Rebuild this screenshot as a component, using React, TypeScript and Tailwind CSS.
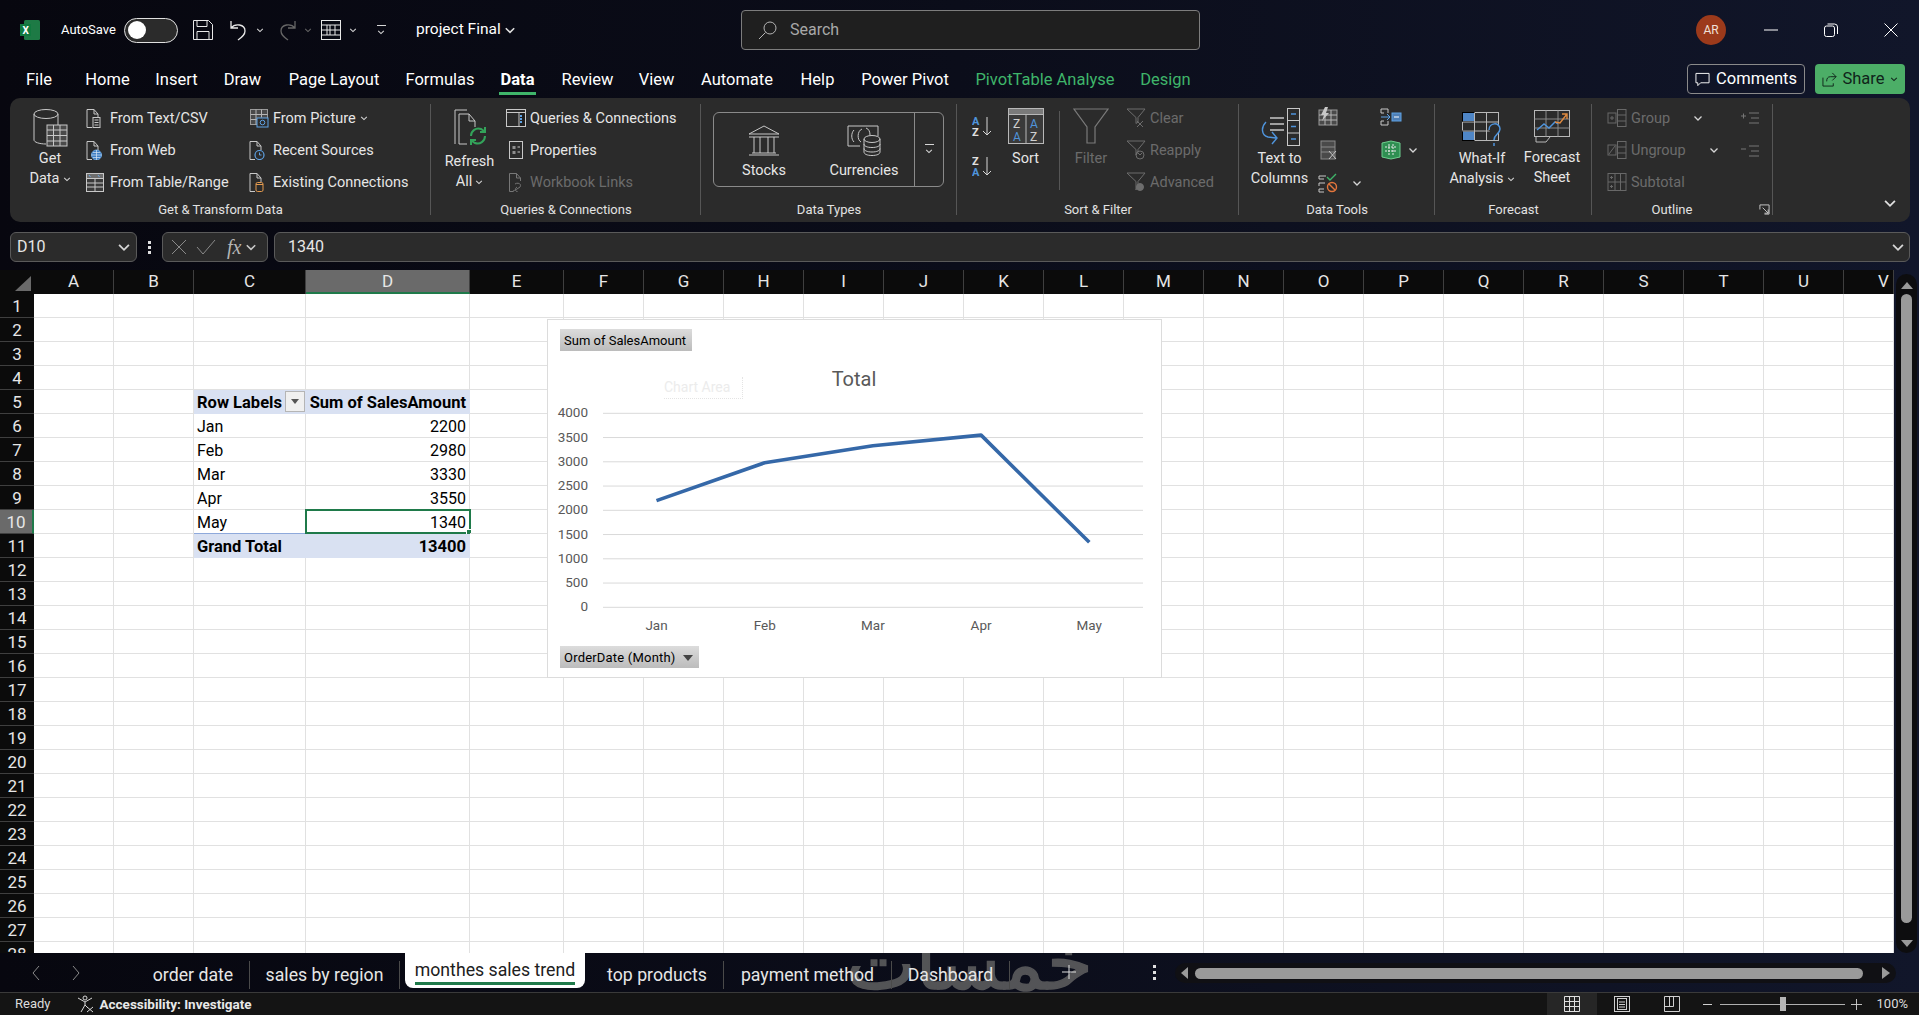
import React from "react";

const font = "font-['Roboto',sans-serif]";

type IconProps = { className?: string; children: React.ReactNode; box?: string };

const Ic = ({ className = "w-5 h-5", children, box = "0 0 20 20" }: IconProps) => (
  <svg viewBox={box} fill="none" stroke="currentColor" strokeWidth={1} className={`shrink-0 ${className}`}>
    {children}
  </svg>
);

const Chevron = ({ className = "w-2.5 h-2.5 text-[#d6d6d6]" }: { className?: string }) => (
  <Ic box="0 0 10 10" className={className}>
    <path d="M1.5 3.5 5 7l3.5-3.5" strokeWidth={1.3} />
  </Ic>
);

const DocBase = ({ children }: { children?: React.ReactNode }) => (
  <g transform="translate(-2.5 0)">
    <path d="M3.5 19.5v-18h7l4 4.5v4" stroke="#c8c8c8" />
    <path d="M10.5 1.5V6h4" stroke="#c8c8c8" />
    <path d="M3.5 19.5h5" stroke="#c8c8c8" />
    {children}
  </g>
);

const icons: Record<string, React.ReactNode> = {
  text: (
    <DocBase>
      <rect x="9.5" y="9.5" width="7" height="10" stroke="#c8c8c8" />
      <path d="M11 12h4M11 14.5h4M11 17h4" stroke="#c8c8c8" />
    </DocBase>
  ),
  web: (
    <DocBase>
      <circle cx="13" cy="15" r="5" fill="#3f7fc4" stroke="#6fa8e0" />
      <path d="M8 15h10M13 10v10M9.5 12.5h7M9.5 17.5h7" stroke="#d8e6f5" strokeWidth={0.7} />
    </DocBase>
  ),
  table: (
    <>
      <rect x="0.5" y="1.5" width="17" height="18" fill="#3a3a3a" stroke="#c8c8c8" />
      <rect x="0.5" y="1.5" width="17" height="5" fill="#6e6e6e" stroke="#c8c8c8" />
      <path d="M.5 11h17M.5 15h17M9 6.5v13" stroke="#c8c8c8" />
      <path d="M3 3l1.5 2M12 3l1.5 2" stroke="#6fa8e0" />
    </>
  ),
  picture: (
    <>
      <rect x="1.5" y="1.5" width="17" height="15" stroke="#9a9a9a" fill="#4a4a4a" />
      <path d="M1.5 6.5h17M1.5 11.5h9M7 1.5v15M12.5 1.5v8" stroke="#b5b5b5" />
      <rect x="8" y="10" width="11" height="9" fill="#2b2b2b" stroke="#5fa3e6" />
      <circle cx="13.5" cy="14.5" r="2.3" stroke="#5fa3e6" />
    </>
  ),
  recent: (
    <DocBase>
      <circle cx="13" cy="15" r="4.5" fill="#2b2b2b" stroke="#5fa3e6" strokeWidth={1.2} />
      <path d="M13 12.5V15h2" stroke="#5fa3e6" />
    </DocBase>
  ),
  existing: (
    <DocBase>
      <rect x="9.5" y="10.5" width="7" height="9" rx="1.5" fill="#2b2b2b" stroke="#e39a4f" />
      <path d="M9.5 12.5h7" stroke="#e39a4f" />
    </DocBase>
  ),
  queries: (
    <>
      <rect x="0.5" y="1.5" width="19" height="17" stroke="#c8c8c8" />
      <path d="M0.5 4.5h19" stroke="#c8c8c8" />
      <rect x="13" y="4.5" width="6.5" height="14" fill="#1f1f1f" stroke="#c8c8c8" />
      <path d="M15 7v9" stroke="#5fa3e6" strokeWidth={2} strokeDasharray="2 1" />
    </>
  ),
  props: (
    <>
      <rect x="3.5" y="1.5" width="13" height="17" stroke="#c8c8c8" />
      <path d="M6.5 6h3v3h-3zM6.5 11h3v3h-3z" fill="#8f8f8f" stroke="none" />
      <path d="M11.5 7h2.5M11.5 12h2.5" stroke="#c8c8c8" />
    </>
  ),
  links: (
    <>
      <path d="M3.5 19.5v-18h7l4 4.5v3M3.5 19.5h4M10.5 1.5V6h4" stroke="#777" />
      <path d="M9 12c3-2 7 0 5 3l-3 2c-2 2-5 1-4 3M12 20c-2 0-4-3-1-5" stroke="#777" />
    </>
  ),
  clear: (
    <>
      <path d="M1 1h18l-7 8.5V14l-2 1.5V9.5z" stroke="#6d6d6d" />
      <path d="m11 13 6 6m0-6-6 6" stroke="#6d6d6d" />
    </>
  ),
  reapply: (
    <>
      <path d="M1 1h18l-7 8.5V12l-2 3V9.5z" stroke="#6d6d6d" />
      <circle cx="14" cy="15" r="4" stroke="#6d6d6d" />
      <path d="M12 13l2 2 2-2" stroke="#6d6d6d" />
    </>
  ),
  advanced: (
    <>
      <path d="M1 1h18l-7 8.5V12l-2 6V9.5z" stroke="#6d6d6d" />
      <circle cx="14" cy="15" r="3.5" fill="#6d6d6d" stroke="#6d6d6d" />
    </>
  ),
  group: (
    <>
      <rect x="1" y="5" width="8" height="10" stroke="#686868" />
      <path d="M3 10h4M5 8v4" stroke="#686868" />
      <rect x="10.5" y="1.5" width="8.5" height="17" stroke="#686868" />
      <path d="M10.5 7h8.5M10.5 13h8.5" stroke="#686868" />
    </>
  ),
  ungroup: (
    <>
      <rect x="1" y="5" width="8" height="10" stroke="#686868" />
      <path d="m2 14 6-8" stroke="#686868" />
      <rect x="10.5" y="1.5" width="8.5" height="17" stroke="#686868" />
      <path d="M10.5 7h8.5M10.5 13h8.5" stroke="#686868" />
    </>
  ),
  subtotal: (
    <>
      <rect x="1" y="1.5" width="18" height="17" stroke="#686868" />
      <path d="M1 10h18M8 1.5v17M13.5 1.5v17" stroke="#686868" />
      <path d="M3 5.5h3M4.5 4v3M3 14.5h3M4.5 13v3" stroke="#686868" />
    </>
  ),
};

const SmallItem = ({ icon, label, muted, tail }: { icon: string; label: string; muted?: boolean; tail?: React.ReactNode }) => (
  <div className={`flex items-center h-8 whitespace-nowrap ${muted ? "text-[#6b6b6b]" : "text-[#e6e6e6]"}`}>
    <Ic className="w-5 h-5 mr-1">{icons[icon]}</Ic>
    <span className="mt-[2px]">{label}</span>
    {tail}
  </div>
);

const GroupBox = ({
  width,
  label,
  children,
  extra,
  labelClass = "",
}: {
  width: string;
  label: string;
  children: React.ReactNode;
  extra?: React.ReactNode;
  labelClass?: string;
}) => (
  <div className={`relative flex flex-col shrink-0 ${width}`}>
    <div className="flex-1 min-h-0 relative">{children}</div>
    <div className={`h-[24px] text-center text-[13px] leading-[24px] text-[#e2e2e2] whitespace-nowrap ${labelClass}`}>{label}</div>
    {extra}
    <div className="absolute right-0 top-[6px] bottom-[7px] w-px bg-[#565656]" />
  </div>
);

const BigLabel = ({ lines, chevron, muted }: { lines: string[]; chevron?: boolean; muted?: boolean }) => (
  <div className={`text-center leading-[20px] whitespace-nowrap ${muted ? "text-[#6b6b6b]" : "text-[#e6e6e6]"}`}>
    {lines.map((l, i) => (
      <div key={l} className="flex items-center justify-center gap-[3px]">
        {l}
        {chevron && i === lines.length - 1 && <Chevron className="w-2 h-2 text-[#d6d6d6]" />}
      </div>
    ))}
  </div>
);

const GetAndTransform = () => (
  <GroupBox width="w-[421px]" label="Get & Transform Data">
    <div className="flex pt-[4px] h-full">
      <div className="w-[76px] flex flex-col items-center pl-[4px] pt-[6px]">
        <Ic box="0 0 36 40" className="w-9 h-10">
          <path d="M2 6v26c0 2 5 4 12 4" stroke="#c8c8c8" />
          <ellipse cx="14" cy="6" rx="12" ry="4.5" stroke="#c8c8c8" />
          <path d="M26 6v11" stroke="#c8c8c8" />
          <rect x="15" y="17" width="20" height="21" fill="#4a4a4a" stroke="#c8c8c8" />
          <path d="M15 22h20M15 27.5h20M15 33h20M21.5 17v21M28 17v21" stroke="#c8c8c8" />
        </Ic>
        <div className="mt-[1px]"><BigLabel lines={["Get", "Data"]} chevron /></div>
      </div>
      <div className="w-[163px]">
        <SmallItem icon="text" label="From Text/CSV" />
        <SmallItem icon="web" label="From Web" />
        <SmallItem icon="table" label="From Table/Range" />
      </div>
      <div>
        <SmallItem icon="picture" label="From Picture" tail={<Chevron className="w-2 h-2 ml-1 text-[#d6d6d6]" />} />
        <SmallItem icon="recent" label="Recent Sources" />
        <SmallItem icon="existing" label="Existing Connections" />
      </div>
    </div>
  </GroupBox>
);

const QueriesGroup = () => (
  <GroupBox width="w-[270px]" label="Queries & Connections">
    <div className="flex pt-[4px] h-full">
      <div className="w-[75px] flex flex-col items-center pl-[2px] pt-[6px]">
        <Ic box="0 0 36 40" className="w-9 h-10 mb-[4px]">
          <path d="M3 36V2h12M7 36V6h10l6 7v6M7 36h8M17 6v7h6" stroke="#c8c8c8" />
          <path d="M19 28c0-5 5-9 10-7l3 2M33 28c0 5-5 9-10 7l-3-2" stroke="#33a35a" strokeWidth={2} />
          <path d="M33 19v5h-5M19 37v-5h5" stroke="#33a35a" strokeWidth={2} />
        </Ic>
        <BigLabel lines={["Refresh", "All"]} chevron />
      </div>
      <div>
        <SmallItem icon="queries" label="Queries & Connections" />
        <SmallItem icon="props" label="Properties" />
        <SmallItem icon="links" label="Workbook Links" muted />
      </div>
    </div>
  </GroupBox>
);

const DataTypes = () => (
  <GroupBox width="w-[256px]" label="Data Types">
    <div className="pl-[12px] pt-[14px]">
      <div className="flex w-[231px] h-[75px] rounded-md border border-[#8a8a8a]">
        <div className="flex-1 flex pt-[11px]">
          <div className="w-[100px] flex flex-col items-center text-[#e6e6e6]">
            <Ic box="0 0 36 32" className="w-9 h-8 text-[#c8c8c8] mb-[4px]">
              <path d="M18 2 3 10h30zM3 13h30M6 29h24M3 31h30M8 13v16M14 13v16M22 13v16M28 13v16" />
            </Ic>
            Stocks
          </div>
          <div className="flex-1 flex flex-col items-center text-[#e6e6e6]">
            <Ic box="0 0 36 32" className="w-9 h-8 text-[#c8c8c8] mb-[4px]">
              <path d="M2 22V2h30v10M2 22h12" />
              <path d="M8 6c-3 3-3 9 0 12M16 5c-5 2-5 11-1 13M20 4c3 1 4 4 4 7" />
              <ellipse cx="26" cy="15" rx="8" ry="3.5" fill="#2b2b2b" />
              <path d="M18 15v13c0 2 3 3.5 8 3.5s8-1.5 8-3.5V15M18 20c0 2 3 3.5 8 3.5s8-1.5 8-3.5M18 24.5c0 2 3 3.5 8 3.5s8-1.5 8-3.5" />
            </Ic>
            Currencies
          </div>
        </div>
        <div className="w-[29px] border-l border-[#8a8a8a] flex flex-col items-center justify-center text-[#d6d6d6]">
          <div className="w-[9px] h-px bg-[#d6d6d6] mb-[2px]" />
          <Chevron className="w-2.5 h-2 text-[#d6d6d6]" />
        </div>
      </div>
    </div>
  </GroupBox>
);

const SortFilter = () => (
  <GroupBox width="w-[282px]" label="Sort & Filter">
    <div className="flex pt-[4px] h-full">
      <div className="w-[43px] pl-[15px] pt-[14px] flex flex-col gap-[19px]">
        <Ic box="0 0 22 21" className="w-[22px] h-[21px]">
          <text x="0" y="9" fontSize="11" fill="#4f94dc" stroke="none" fontWeight="700">A</text>
          <text x="0" y="19.5" fontSize="11" fill="#e0e0e0" stroke="none" fontWeight="700">Z</text>
          <path d="M15 1v18M11 15l4 4 4-4" stroke="#d8d8d8" />
        </Ic>
        <Ic box="0 0 22 21" className="w-[22px] h-[21px]">
          <text x="0" y="9" fontSize="11" fill="#e0e0e0" stroke="none" fontWeight="700">Z</text>
          <text x="0" y="19.5" fontSize="11" fill="#4f94dc" stroke="none" fontWeight="700">A</text>
          <path d="M15 1v18M11 15l4 4 4-4" stroke="#d8d8d8" />
        </Ic>
      </div>
      <div className="w-[51px] mr-[8px] flex flex-col items-center pt-[6px]">
        <Ic box="0 0 36 36" className="w-9 h-9">
          <rect x="0.5" y="0.5" width="35" height="35" fill="#3a3a3a" stroke="#b8b8b8" />
          <rect x="0.5" y="0.5" width="35" height="6" fill="#7a7a7a" stroke="#b8b8b8" />
          <path d="M18 6.5v29" stroke="#b8b8b8" />
          <text x="5" y="20" fontSize="12" fill="#d0d0d0" stroke="none">Z</text>
          <text x="5" y="33" fontSize="12" fill="#4f94dc" stroke="none">A</text>
          <text x="22" y="20" fontSize="12" fill="#4f94dc" stroke="none">A</text>
          <text x="22" y="33" fontSize="12" fill="#d0d0d0" stroke="none">Z</text>
        </Ic>
        <div className="mt-[5px]"><BigLabel lines={["Sort"]} /></div>
      </div>
      <div className="w-px h-[79px] mt-[9px] bg-[#565656]" />
      <div className="w-[62px] flex flex-col items-center pt-[6px]">
        <Ic box="0 0 36 36" className="w-9 h-9 text-[#7a7a7a]">
          <path d="M1 1h34L22 19v16h-8V19z" strokeWidth={1.2} />
        </Ic>
        <div className="mt-[5px]"><BigLabel lines={["Filter"]} muted /></div>
      </div>
      <div className="pl-[4px]">
        <SmallItem icon="clear" label="Clear" muted />
        <SmallItem icon="reapply" label="Reapply" muted />
        <SmallItem icon="advanced" label="Advanced" muted />
      </div>
    </div>
  </GroupBox>
);

const DataTools = () => (
  <GroupBox width="w-[196px]" label="Data Tools">
    <div className="flex pt-[4px] h-full">
      <div className="w-[79px] flex flex-col items-center pl-[2px] pt-[6px]">
        <Ic box="0 0 40 38" className="w-10 h-[38px]">
          <path d="M10 10h14M10 16h14M10 22h14" stroke="#c8c8c8" strokeWidth={1.4} />
          <rect x="27.5" y="0.5" width="12" height="37" stroke="#c8c8c8" />
          <path d="M27.5 12.5h12M27.5 25h12" stroke="#c8c8c8" />
          <path d="M31 6h5M31 18.5h5M31 31h5" stroke="#4f94dc" strokeWidth={1.6} />
          <path d="M6 14c-5 5-5 13 2 15l8 1M12 24l5 6-5 6" stroke="#4f94dc" strokeWidth={1.4} />
        </Ic>
        <div className="mt-[3px]"><BigLabel lines={["Text to", "Columns"]} /></div>
      </div>
      <div className="w-[62px] flex flex-col">
        <Ic className="w-5 h-5 mt-[5px] ml-[0px]">
          <rect x="1" y="3" width="18" height="15" fill="#4a4a4a" stroke="#9a9a9a" />
          <path d="M1 8h18M1 13h18M7 3v15M13 3v15" stroke="#b5b5b5" />
          <path d="M7 0 3 8h3l-2 6 7-8H8l2-6z" fill="#c8c8c8" stroke="none" />
        </Ic>
        <Ic className="w-5 h-5 mt-[13px]">
          <rect x="3" y="1" width="14" height="18" fill="#4a4a4a" stroke="#8a8a8a" />
          <path d="M3 7h14M3 12h14" stroke="#8a8a8a" />
          <path d="m11 11 7 8m0-8-7 8" stroke="#c8c8c8" />
        </Ic>
        <div className="flex items-center mt-[13px]">
          <Ic className="w-5 h-5">
            <path d="M1 3h7M1 3v3h5M1 10h6M1 10v3M1 16h5M1 16v3h5" stroke="#c8c8c8" />
            <path d="m9 4 3 3 6-6" stroke="#3fb56a" strokeWidth={1.4} />
            <circle cx="14" cy="14" r="4.5" stroke="#e3763c" strokeWidth={1.4} />
            <path d="m11 11 6 6" stroke="#e3763c" strokeWidth={1.4} />
          </Ic>
          <Chevron className="w-2.5 h-2.5 ml-[14px] text-[#d6d6d6]" />
        </div>
      </div>
      <div className="flex flex-col">
        <Ic box="0 0 22 20" className="w-[22px] h-5 mt-[5px]">
          <path d="M1 2h7v4M1 2v4h3M1 14v4h7v-4M1 14h3" stroke="#c8c8c8" />
          <path d="M1 10h9M7 7l3 3-3 3" stroke="#5fa3e6" />
          <rect x="12" y="6" width="9" height="8" fill="#4f7fb5" stroke="#5fa3e6" />
          <path d="M14 10h5" stroke="#fff" />
        </Ic>
        <div className="flex items-center mt-[13px]">
          <Ic box="0 0 22 20" className="w-[22px] h-5">
            <path d="M2 3 11 1l9 2v14l-9 2-9-2z" fill="#2f8f52" stroke="#6fcf8f" />
            <path d="M5 7h12M5 11h12M9 4v12M13 4v12" stroke="#e8e8e8" strokeDasharray="2 1" />
          </Ic>
          <Chevron className="w-2.5 h-2.5 ml-[6px] text-[#d6d6d6]" />
        </div>
      </div>
    </div>
  </GroupBox>
);

const ForecastGroup = () => (
  <GroupBox width="w-[157px]" label="Forecast">
    <div className="flex pt-[4px] h-full">
      <div className="w-[94px] flex flex-col items-center pt-[10px]">
        <Ic box="0 0 40 36" className="w-10 h-9 mb-[1px]">
          <rect x="0.5" y="0.5" width="36" height="28" stroke="#b8b8b8" />
          <rect x="0.5" y="0.5" width="12" height="9" fill="#4f86c6" />
          <rect x="0.5" y="19" width="12" height="9.5" fill="#4f86c6" />
          <path d="M0.5 10h36M0.5 19h36M12.5 0.5v28M24.5 0.5v28" stroke="#b8b8b8" />
          <path d="M27 18c0-8 11-8 11-1 0 5-6 5-6 11M32 31v3" stroke="#4f94dc" strokeWidth={1.5} fill="#2b2b2b" />
        </Ic>
        <BigLabel lines={["What-If", "Analysis"]} chevron />
      </div>
      <div className="w-[46px] flex flex-col items-center pt-[8px]">
        <Ic box="0 0 36 34" className="w-9 h-[34px] mb-[4px]">
          <rect x="0.5" y="0.5" width="35" height="26" stroke="#b8b8b8" />
          <path d="M0.5 9h35M0.5 18h35M12 0.5v26M24 0.5v26" stroke="#8a8a8a" />
          <path d="M3 20l7-6 5 4 6-6 3 2" stroke="#4f94dc" strokeWidth={1.4} />
          <path d="m21 12 5 1 7-9M28 4h5v5" stroke="#e08a3f" strokeWidth={1.4} />
          <path d="M2 27v5h10l4-5" stroke="#b8b8b8" />
        </Ic>
        <BigLabel lines={["Forecast", "Sheet"]} />
      </div>
    </div>
  </GroupBox>
);

const OutlineGroup = () => (
  <GroupBox
    width="w-[181px]"
    label="Outline"
    labelClass="pr-[21px]"
    extra={
      <Ic box="0 0 12 12" className="absolute right-[3px] bottom-[7px] w-[11px] h-[11px] text-[#cfcfcf]">
        <path d="M1 6V1h10v10H6M4 4l6 6M10 6v4H6" />
      </Ic>
    }
  >
    <div className="pt-[4px] pl-[15px] flex">
      <div className="w-[133px]">
        <SmallItem icon="group" label="Group" muted tail={<Chevron className="w-2.5 h-2.5 ml-[23px] text-[#d6d6d6]" />} />
        <SmallItem icon="ungroup" label="Ungroup" muted tail={<Chevron className="w-2.5 h-2.5 ml-[23px] text-[#d6d6d6]" />} />
        <SmallItem icon="subtotal" label="Subtotal" muted />
      </div>
      <div className="pt-[6px] flex flex-col gap-[13px]">
        <Ic className="w-5 h-5 text-[#777]">
          <path d="M1 8h5M3.5 5.5v5M9 5h10M11 10h8M9 15h10" />
        </Ic>
        <Ic className="w-5 h-5 text-[#777]">
          <path d="M1 8h5M9 5h10M11 10h8M9 15h10" />
        </Ic>
      </div>
    </div>
  </GroupBox>
);

const tabs = [
  { label: "Home", w: "w-[45px]", c: "text-white" },
  { label: "Insert", w: "w-[43px]", c: "text-white" },
  { label: "Draw", w: "w-[39px]", c: "text-white" },
  { label: "Page Layout", w: "w-[94px]", c: "text-white" },
  { label: "Formulas", w: "w-[68px]", c: "text-white" },
  { label: "Data", w: "w-[37px]", c: "text-white font-bold" },
  { label: "Review", w: "w-[53px]", c: "text-white" },
  { label: "View", w: "w-[35px]", c: "text-white" },
  { label: "Automate", w: "w-[76px]", c: "text-white" },
  { label: "Help", w: "w-[35px]", c: "text-white" },
  { label: "Power Pivot", w: "w-[90px]", c: "text-white" },
  { label: "PivotTable Analyse", w: "w-[140px]", c: "text-[#3fb56a]" },
  { label: "Design", w: "w-[51px]", c: "text-[#3fb56a]" },
];

const TitleBar = () => (
  <div className="h-16 shrink-0 flex items-center pb-[4px] text-white">
    <Ic box="0 0 20 20" className="w-5 h-5 ml-5">
      <rect x="4" y="0" width="16" height="20" rx="1.5" fill="#1d7a45" stroke="none" />
      <rect x="0" y="4" width="11" height="12" fill="#10793f" stroke="none" />
      <text x="2.5" y="13.5" fontSize="10" fontWeight="700" fill="#fff" stroke="none">X</text>
    </Ic>
    <span className="ml-[21px] w-[63px] text-[13px]">AutoSave</span>
    <div className="w-[54px] h-[25px] rounded-full border border-[#e0e0e0] bg-[#2b2b2b] flex items-center pl-[3px]">
      <div className="w-[18px] h-[18px] rounded-full bg-white" />
    </div>
    <Ic box="0 0 20 20" className="w-5 h-5 ml-[15px] text-[#e8e8e8]">
      <path d="M.5.5h15l4 4v15H.5zM4 .5v6h10v-6M4 19.5v-8h12v8" />
    </Ic>
    <Ic box="0 0 20 22" className="w-5 h-[22px] ml-[16px] text-[#e8e8e8]">
      <path d="M2 2v7h7M2 9c4-5 14-4 14 3 0 4-3 6-7 9" strokeWidth={1.3} />
    </Ic>
    <Chevron className="w-2 h-2 ml-[7px] text-[#d6d6d6]" />
    <Ic box="0 0 20 22" className="w-5 h-[22px] ml-[13px] text-[#666]">
      <path d="M18 2v7h-7M18 9C14 4 4 5 4 12c0 4 3 6 7 9" strokeWidth={1.3} />
    </Ic>
    <Chevron className="w-2 h-2 ml-[7px] text-[#666]" />
    <Ic box="0 0 20 20" className="w-5 h-5 ml-[9px] text-[#e8e8e8]">
      <rect x=".5" y=".5" width="19" height="19" />
      <path d="M.5 5h19M.5 15h19M6 5v10M14 5v10M.5 10h19M9 5v10" />
    </Ic>
    <Chevron className="w-2 h-2 ml-[8px] text-[#d6d6d6]" />
    <div className="ml-[19px] flex flex-col items-center gap-[2px]">
      <div className="w-[9px] h-px bg-[#d6d6d6]" />
      <Chevron className="w-2.5 h-2 text-[#d6d6d6]" />
    </div>
    <span className="ml-[30px] w-[82px] text-[15.5px] whitespace-nowrap">project Final</span>
    <Chevron className="w-3 h-3 ml-[6px] text-[#e0e0e0]" />
    <div className="ml-[225px] w-[459px] h-10 rounded-[4px] border border-[#7d7d7d] bg-[#1f1f1f] flex items-center pl-[16px] text-[#a8a8a8] text-[16px]">
      <Ic box="0 0 20 20" className="w-5 h-5 text-[#b5b5b5]">
        <circle cx="12" cy="8" r="6" />
        <path d="M7.5 12.5 1 19" />
      </Ic>
      <span className="ml-[12px]">Search</span>
    </div>
    <div className="ml-[496px] w-[30px] h-[30px] rounded-full bg-[#9c3a1b] flex items-center justify-center text-[12px] text-[#f0e0d8]">AR</div>
    <Ic box="0 0 14 14" className="w-[14px] h-[14px] ml-[38px] text-white">
      <path d="M0 7h14" />
    </Ic>
    <Ic box="0 0 14 14" className="w-[14px] h-[14px] ml-[46px] text-white">
      <rect x=".5" y="3" width="10" height="10.5" rx="2" />
      <path d="M3.5 1h7a3 3 0 0 1 3 3v7" />
    </Ic>
    <Ic box="0 0 14 14" className="w-[14px] h-[14px] ml-[46px] text-white">
      <path d="m.5.5 13 13m0-13-13 13" />
    </Ic>
  </div>
);

const TabBar = () => (
  <div className="h-[34px] shrink-0 flex items-start text-[16.5px] leading-[32px] text-white pl-[26px] pr-[14px] relative">
    <span className="w-[24px] mr-[35px] text-center">File</span>
    <div className="flex gap-[25px]">
      {tabs.map((t) => (
        <div key={t.label} className={`relative text-center whitespace-nowrap flex justify-center ${t.w} ${t.c}`}>
          {t.label}
          {t.label === "Data" && <div className="absolute left-0 right-0 top-[28px] h-[3px] bg-[#3fb56a]" />}
        </div>
      ))}
    </div>
    <div className="ml-auto flex gap-[10px]">
      <div className="w-[118px] h-[30px] rounded-[4px] border border-[#8a8a8a] flex items-center justify-center gap-[6px] leading-none">
        <Ic box="0 0 16 16" className="w-[15px] h-[15px] text-white">
          <path d="M1 1.5h14v10H6l-3 3v-3H1z" />
        </Ic>
        Comments
      </div>
      <div className="w-[90px] h-[30px] rounded-[4px] bg-[#4cae67] flex items-center justify-center gap-[5px] leading-none text-[#10241a]">
        <Ic box="0 0 16 16" className="w-[15px] h-[15px]">
          <path d="M11 1l4 4-4 4M15 5H9C6 5 5 7 5 10M1 6v9h11v-3" />
        </Ic>
        Share
        <Chevron className="w-2 h-2 text-[#10241a]" />
      </div>
    </div>
  </div>
);

const Ribbon = () => (
  <div className="ml-[10px] mr-[9px] h-[124px] shrink-0 rounded-[10px] bg-[#2b2b2b] flex text-[14.5px] relative">
    <GetAndTransform />
    <QueriesGroup />
    <DataTypes />
    <SortFilter />
    <DataTools />
    <ForecastGroup />
    <OutlineGroup />
    <Chevron className="absolute right-[13px] bottom-[12px] w-3.5 h-3.5 text-[#e0e0e0]" />
  </div>
);

const FormulaBar = () => (
  <div className="mt-[10px] ml-[10px] mr-[9px] h-[30px] shrink-0 flex text-[16px] text-[#e6e6e6]">
    <div className="w-[127px] rounded-md border border-[#5a5a5a] bg-[#2b2b2b] flex items-center justify-between pl-[6px] pr-[5px]">
      D10
      <Chevron className="w-3.5 h-3.5 text-[#d6d6d6]" />
    </div>
    <div className="w-[25px] flex flex-col items-center justify-center gap-[2px]">
      <div className="w-[3px] h-[3px] bg-[#e0e0e0]" />
      <div className="w-[3px] h-[3px] bg-[#e0e0e0]" />
      <div className="w-[3px] h-[3px] bg-[#e0e0e0]" />
    </div>
    <div className="w-[106px] rounded-md border border-[#5a5a5a] bg-[#2b2b2b] flex items-center pl-[8px] text-[#8a8a8a]">
      <Ic box="0 0 16 16" className="w-4 h-4"><path d="m1 1 14 14M15 1 1 15" /></Ic>
      <Ic box="0 0 20 16" className="w-5 h-4 ml-[9px]"><path d="m1 8 6 7L19 1" /></Ic>
      <span className="ml-[11px] font-['Liberation_Serif',serif] italic text-[20px] leading-none text-[#b5b5b5]">fx</span>
      <Chevron className="w-3 h-3 ml-[4px] text-[#c8c8c8]" />
    </div>
    <div className="ml-[6px] flex-1 rounded-md border border-[#5a5a5a] bg-[#2b2b2b] flex items-center justify-between pl-[13px] pr-[4px]">
      1340
      <Chevron className="w-3.5 h-3.5 text-[#d6d6d6]" />
    </div>
  </div>
);

const columns = [
  { n: "A", w: "w-[80px]" },
  { n: "B", w: "w-[80px]" },
  { n: "C", w: "w-[112px]" },
  { n: "D", w: "w-[164px]" },
  { n: "E", w: "w-[94px]" },
  ...["F", "G", "H", "I", "J", "K", "L", "M", "N", "O", "P", "Q", "R", "S", "T", "U"].map((n) => ({ n, w: "w-[80px]" })),
  { n: "V", w: "w-[50px]" },
];

const pivot: Record<number, { c: string; d: string; kind?: "head" | "total" }> = {
  5: { c: "Row Labels", d: "Sum of SalesAmount", kind: "head" },
  6: { c: "Jan", d: "2200" },
  7: { c: "Feb", d: "2980" },
  8: { c: "Mar", d: "3330" },
  9: { c: "Apr", d: "3550" },
  10: { c: "May", d: "1340" },
  11: { c: "Grand Total", d: "13400", kind: "total" },
};

const ColumnHeader = () => (
  <div className="h-[24px] shrink-0 flex bg-[#0b0b0b] text-[#e6e6e6] text-[17px] leading-[23px]">
    <div className="w-[34px] shrink-0 relative">
      <div className="absolute right-[3px] bottom-[3px] w-0 h-0 border-l-[16px] border-l-transparent border-b-[15px] border-b-[#6a6a6a]" />
    </div>
    {columns.map((col) => (
      <div
        key={col.n}
        className={`${col.w} shrink-0 border-r border-[#3f3f3f] ${col.n === "V" ? "pl-[34px]" : "text-center"} ${
          col.n === "D" ? "bg-[#6a6a6a] border-b-2 border-b-[#1f7a4a]" : ""
        }`}
      >
        {col.n}
      </div>
    ))}
  </div>
);

const Cell = ({ col, row }: { col: string; row: number }) => {
  const p = pivot[row];
  const inC = p && col === "C";
  const inD = p && col === "D";
  const shaded = p?.kind && (inC || inD);
  return (
    <div
      className={`relative shrink-0 h-[24px] border-r border-b border-[#e1e1e1] leading-[25px] text-black whitespace-nowrap ${
        columns.find((c) => c.n === col)?.w
      } ${shaded ? "bg-[#d9e1f2] font-bold text-[16.5px] border-r-[#d9e1f2] border-b-[#d9e1f2]" : "text-[16px]"} ${
        row === 5 && shaded ? "border-b-[#8ea9db]" : ""
      } ${row === 10 && (inC || inD) ? "border-b-[#8ea9db]" : ""} ${inD ? "text-right pr-[3px]" : ""} ${inC ? "pl-[3px]" : ""}`}
    >
      {inC && p.c}
      {inD && p.d}
      {inC && row === 5 && (
        <div className="absolute right-0 top-[1px] w-[20px] h-[21px] border border-[#b5b5b5] bg-[#f0f0f0] flex items-center justify-center">
          <div className="w-0 h-0 border-x-[4px] border-x-transparent border-t-[5px] border-t-[#555]" />
        </div>
      )}
      {inD && row === 10 && (
        <div className="absolute -left-px -top-px -right-[2px] -bottom-[1px] border-2 border-[#1f7a4a]">
          <div className="absolute -right-[3px] -bottom-[3px] w-[6px] h-[6px] bg-[#1f7a4a] border border-white" />
        </div>
      )}
    </div>
  );
};

const categories = ["Jan", "Feb", "Mar", "Apr", "May"];
const sales = [2200, 2980, 3330, 3550, 1340];
const ticks = [4000, 3500, 3000, 2500, 2000, 1500, 1000, 500, 0];
const tickY = (v: number) => 288.3 - (v * 194) / 4000;
const catX = (i: number) => 109.5 + i * 108.2;

const SalesChart = () => (
  <div className="absolute left-[547px] top-[25px] w-[615px] h-[359px] bg-white border border-[#dcdcdc]">
    <div className="absolute left-[12px] top-[9px] w-[132px] h-[22px] bg-gradient-to-b from-[#dcdcdc] to-[#bcbcbc] text-[13px] leading-[24px] pl-[4px] text-black">
      Sum of SalesAmount
    </div>
    <div className="absolute left-[12px] top-[326px] w-[139px] h-[22px] bg-gradient-to-b from-[#dcdcdc] to-[#bcbcbc] text-[13px] leading-[24px] pl-[4px] tracking-[0.2px] text-black">
      OrderDate (Month)
      <div className="absolute right-[6px] top-[9px] w-0 h-0 border-x-[5px] border-x-transparent border-t-[6px] border-t-[#444]" />
    </div>
    <div className="absolute left-[116px] top-[57px] w-[79px] h-[22px] border-r border-b border-dotted border-[#e4e4e4] text-[14px] text-[#ececec] leading-[20px]">
      Chart Area
    </div>
    <svg viewBox="0 0 613 357" className="w-full h-full">
      <text x="306" y="66" textAnchor="middle" fontSize="20" fill="#595959" fontFamily="Roboto, sans-serif">Total</text>
      {ticks.map((t) => (
        <g key={t}>
          <line x1="55" x2="595" y1={tickY(t) - 1} y2={tickY(t) - 1} stroke="#d9d9d9" strokeWidth="1" />
          <text x="40" y={tickY(t) + 3} textAnchor="end" fontSize="13.5" fill="#595959" fontFamily="Roboto, sans-serif">{t}</text>
        </g>
      ))}
      {categories.map((c, i) => (
        <text key={c} x={catX(i) - 1} y="310" textAnchor="middle" fontSize="13.5" fill="#595959" fontFamily="Roboto, sans-serif">{c}</text>
      ))}
      <polyline
        points={sales.map((v, i) => `${catX(i) - 1},${tickY(v) - 1}`).join(" ")}
        fill="none"
        stroke="#3568a8"
        strokeWidth="3.6"
        strokeLinejoin="round"
      />
    </svg>
  </div>
);

const SheetGrid = () => {
  const rows = Array.from({ length: 28 }, (_, i) => i + 1);
  return (
    <div className="flex-1 min-w-0 flex flex-col">
      <ColumnHeader />
      <div className="relative flex-1 min-h-0 overflow-hidden bg-white">
        {rows.map((r) => (
          <div key={r} className="flex h-[24px]">
            <div
              className={`w-[34px] shrink-0 border-b border-[#3f3f3f] text-[17px] leading-[25px] text-center text-[#e6e6e6] ${
                r === 10 ? "bg-[#6a6a6a] border-r-2 border-r-[#1f7a4a]" : "bg-[#0b0b0b]"
              }`}
            >
              {r}
            </div>
            {columns.map((col) => (
              <Cell key={col.n} col={col.n} row={r} />
            ))}
          </div>
        ))}
        <SalesChart />
      </div>
    </div>
  );
};

const VerticalScroll = () => (
  <div className="w-[25px] shrink-0 pt-[4px] flex flex-col items-center">
    <div className="w-[21px] h-[679px] rounded-full bg-[#0d0d0f] flex flex-col items-center pt-[8px] pb-[6px]">
      <div className="w-0 h-0 border-x-[6px] border-x-transparent border-b-[7px] border-b-[#9a9a9a]" />
      <div className="mt-[5px] w-[11px] h-[629px] rounded-full bg-[#9a9a9a]" />
      <div className="mt-auto w-0 h-0 border-x-[6px] border-x-transparent border-t-[7px] border-t-[#9a9a9a]" />
    </div>
  </div>
);

const SheetTab = ({ label, width }: { label: string; width: string }) => (
  <div className={`relative ${width} h-[28px] mt-[8px] shrink-0 flex items-center justify-center whitespace-nowrap text-[#e6e6e6] border-r border-[#4a4a4a]`}>
    {label}
  </div>
);

const SheetTabs = () => (
  <div className="relative h-[40px] shrink-0 flex text-[17.7px] border-b border-[#3a3a3a] overflow-hidden">
    <div className="absolute left-[846px] -top-[27px] text-[74px] leading-none font-['DejaVu_Sans',sans-serif] text-[#666] [-webkit-text-stroke:1.5px_#666] opacity-80 select-none whitespace-nowrap">
      خمسات
    </div>
    <Ic box="0 0 10 16" className="w-[10px] h-4 ml-[31px] mt-[12px] text-[#8a8a8a]"><path d="M8 1 2 8l6 7" /></Ic>
    <Ic box="0 0 10 16" className="w-[10px] h-4 ml-[30px] mt-[12px] text-[#8a8a8a]"><path d="m2 1 6 7-6 7" /></Ic>
    <div className="ml-[56px] flex relative">
      <SheetTab label="order date" width="w-[113px]" />
      <SheetTab label="sales by region" width="w-[150px]" />
      <div className="ml-[5px] mr-[6px] w-[180px] h-[35px] rounded-b-lg bg-white shrink-0 flex flex-col items-center text-[#202020]">
        <span className="mt-[6px] leading-[22px] whitespace-nowrap">monthes sales trend</span>
        <div className="mt-[1px] w-[160px] h-[3px] bg-[#1f7a4a]" />
      </div>
      <SheetTab label="top products" width="w-[133px]" />
      <SheetTab label="payment method" width="w-[168px]" />
      <SheetTab label="Dashboard" width="w-[118px]" />
    </div>
    <Ic box="0 0 16 16" className="relative w-4 h-4 ml-[51px] mt-[11px] text-[#e0e0e0]"><path d="M8 1v14M1 8h14" /></Ic>
    <div className="ml-[76px] mt-[12px] flex flex-col gap-[3px]">
      <div className="w-[3px] h-[3px] bg-[#e0e0e0]" />
      <div className="w-[3px] h-[3px] bg-[#e0e0e0]" />
      <div className="w-[3px] h-[3px] bg-[#e0e0e0]" />
    </div>
    <div className="ml-[19px] mt-[10px] w-[721px] h-[20px] rounded-full bg-[#101014] flex items-center pl-[6px] pr-[6px]">
      <div className="w-0 h-0 border-y-[6px] border-y-transparent border-r-[7px] border-r-[#9a9a9a]" />
      <div className="ml-[7px] w-[668px] h-[11px] rounded-full bg-[#9a9a9a]" />
      <div className="ml-auto w-0 h-0 border-y-[6px] border-y-transparent border-l-[8px] border-l-[#9a9a9a]" />
    </div>
  </div>
);

const StatusBar = () => (
  <div className="h-[22px] shrink-0 bg-[#141414] flex items-center text-[13px] text-[#dcdcdc]">
    <span className="ml-[15px]">Ready</span>
    <Ic box="0 0 18 18" className="w-[18px] h-[18px] ml-[27px] text-[#d8d8d8]">
      <circle cx="8" cy="3" r="2" />
      <path d="M1 3 8 7l7-4M8 7v3M8 10l-4 7M8 10l3 3M10 12l6 5m0-5-6 5" />
    </Ic>
    <span className="ml-[4px] font-bold text-[13.5px] text-[#e8e8e8]">Accessibility: Investigate</span>
    <div className="ml-auto flex items-center h-full">
      <div className="w-[50px] h-full bg-[#262626] flex items-center justify-center">
        <Ic box="0 0 16 16" className="w-4 h-4 text-[#e0e0e0]">
          <path d="M.5.5h15v15H.5zM.5 5.5h15M.5 10.5h15M5.5.5v15M10.5.5v15" />
        </Ic>
      </div>
      <div className="w-[50px] flex justify-center">
        <Ic box="0 0 16 16" className="w-4 h-4 text-[#d0d0d0]">
          <rect x=".5" y=".5" width="15" height="15" />
          <rect x="3.5" y="2.5" width="9" height="11" />
          <path d="M5 6h6M5 8.5h6M5 11h6" />
        </Ic>
      </div>
      <div className="w-[50px] flex justify-center">
        <Ic box="0 0 16 16" className="w-4 h-4 text-[#d0d0d0]">
          <path d="M.5.5h15v15H.5zM.5 10.5h9V.5M5.5.5v10" />
        </Ic>
      </div>
      <div className="ml-[6px] w-[9px] h-px bg-[#d0d0d0]" />
      <div className="ml-[8px] w-[125px] h-px bg-[#b0b0b0] relative">
        <div className="absolute left-[60px] -top-[7px] w-[6px] h-[14px] bg-[#b5b5b5]" />
      </div>
      <Ic box="0 0 12 12" className="w-[11px] h-[11px] ml-[6px] text-[#d0d0d0]"><path d="M6 0v12M0 6h12" /></Ic>
      <span className="ml-[15px] mr-[11px] text-[13px]">100%</span>
    </div>
  </div>
);

export default function App() {
  return (
    <div className={`h-screen w-screen overflow-hidden flex flex-col bg-gradient-to-r from-[#07070f] via-[#0b0d1a] to-[#11162a] ${font}`}>
      <TitleBar />
      <TabBar />
      <Ribbon />
      <FormulaBar />
      <div className="mt-[8px] flex-1 min-h-0 flex">
        <SheetGrid />
        <VerticalScroll />
      </div>
      <SheetTabs />
      <StatusBar />
    </div>
  );
}
